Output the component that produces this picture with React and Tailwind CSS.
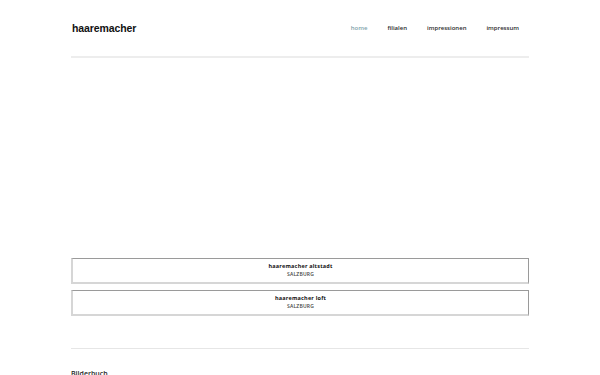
export default function App() {
  const nav = [
    { label: 'home', active: true },
    { label: 'filialen' },
    { label: 'impressionen' },
    { label: 'impressum' },
  ]
  const shops = ['haaremacher altstadt', 'haaremacher loft']

  return (
    <div className="w-[600px] h-[375px] overflow-hidden bg-white" style={{ fontFamily: "'Open Sans', sans-serif" }}>
      <div className="w-[458px] mx-auto">
        {/* header */}
        <header className="h-[56px] flex items-center justify-between pt-[1px]">
          <div
            className="pl-[1px] text-[10.5px] font-bold text-[#111] tracking-[-0.1px]"
            style={{ fontFamily: "'Liberation Sans', Arial, sans-serif" }}
          >
            haaremacher
          </div>
          <nav className="flex items-center gap-[20px] pr-[10px]">
            {nav.map((n) => (
              <span
                key={n.label}
                className={
                  'text-[6px] font-semibold ' +
                  (n.active ? 'text-[#7fa3ab]' : 'text-[#2a2a2a]')
                }
              >
                {n.label}
              </span>
            ))}
          </nav>
        </header>
        <div className="h-[2px] bg-[#ededed]" />

        {/* slider area */}
        <div className="h-[200px]" />

        {/* shops */}
        <div className="flex flex-col gap-[6px]">
          {shops.map((s) => (
            <div
              key={s}
              className="h-[26px] flex flex-col items-center justify-center border-t border-r border-t-[#9a9a9a] border-r-[#9a9a9a] border-l-2 border-b-2 border-l-[#d6d6d6] border-b-[#d6d6d6] leading-none"
            >
              <span className="text-[5.5px] font-bold text-[#111] tracking-[0.2px]">{s}</span>
              <span className="mt-[2px] text-[5px] font-semibold text-[#444] tracking-[0.2px]">SALZBURG</span>
            </div>
          ))}
        </div>

        <div className="h-[32px]" />
        <div className="h-[1px] bg-[#e6e6e6]" />

        <div className="pt-[20px] text-[7px] font-semibold text-[#222]">Bilderbuch</div>
      </div>
    </div>
  )
}
